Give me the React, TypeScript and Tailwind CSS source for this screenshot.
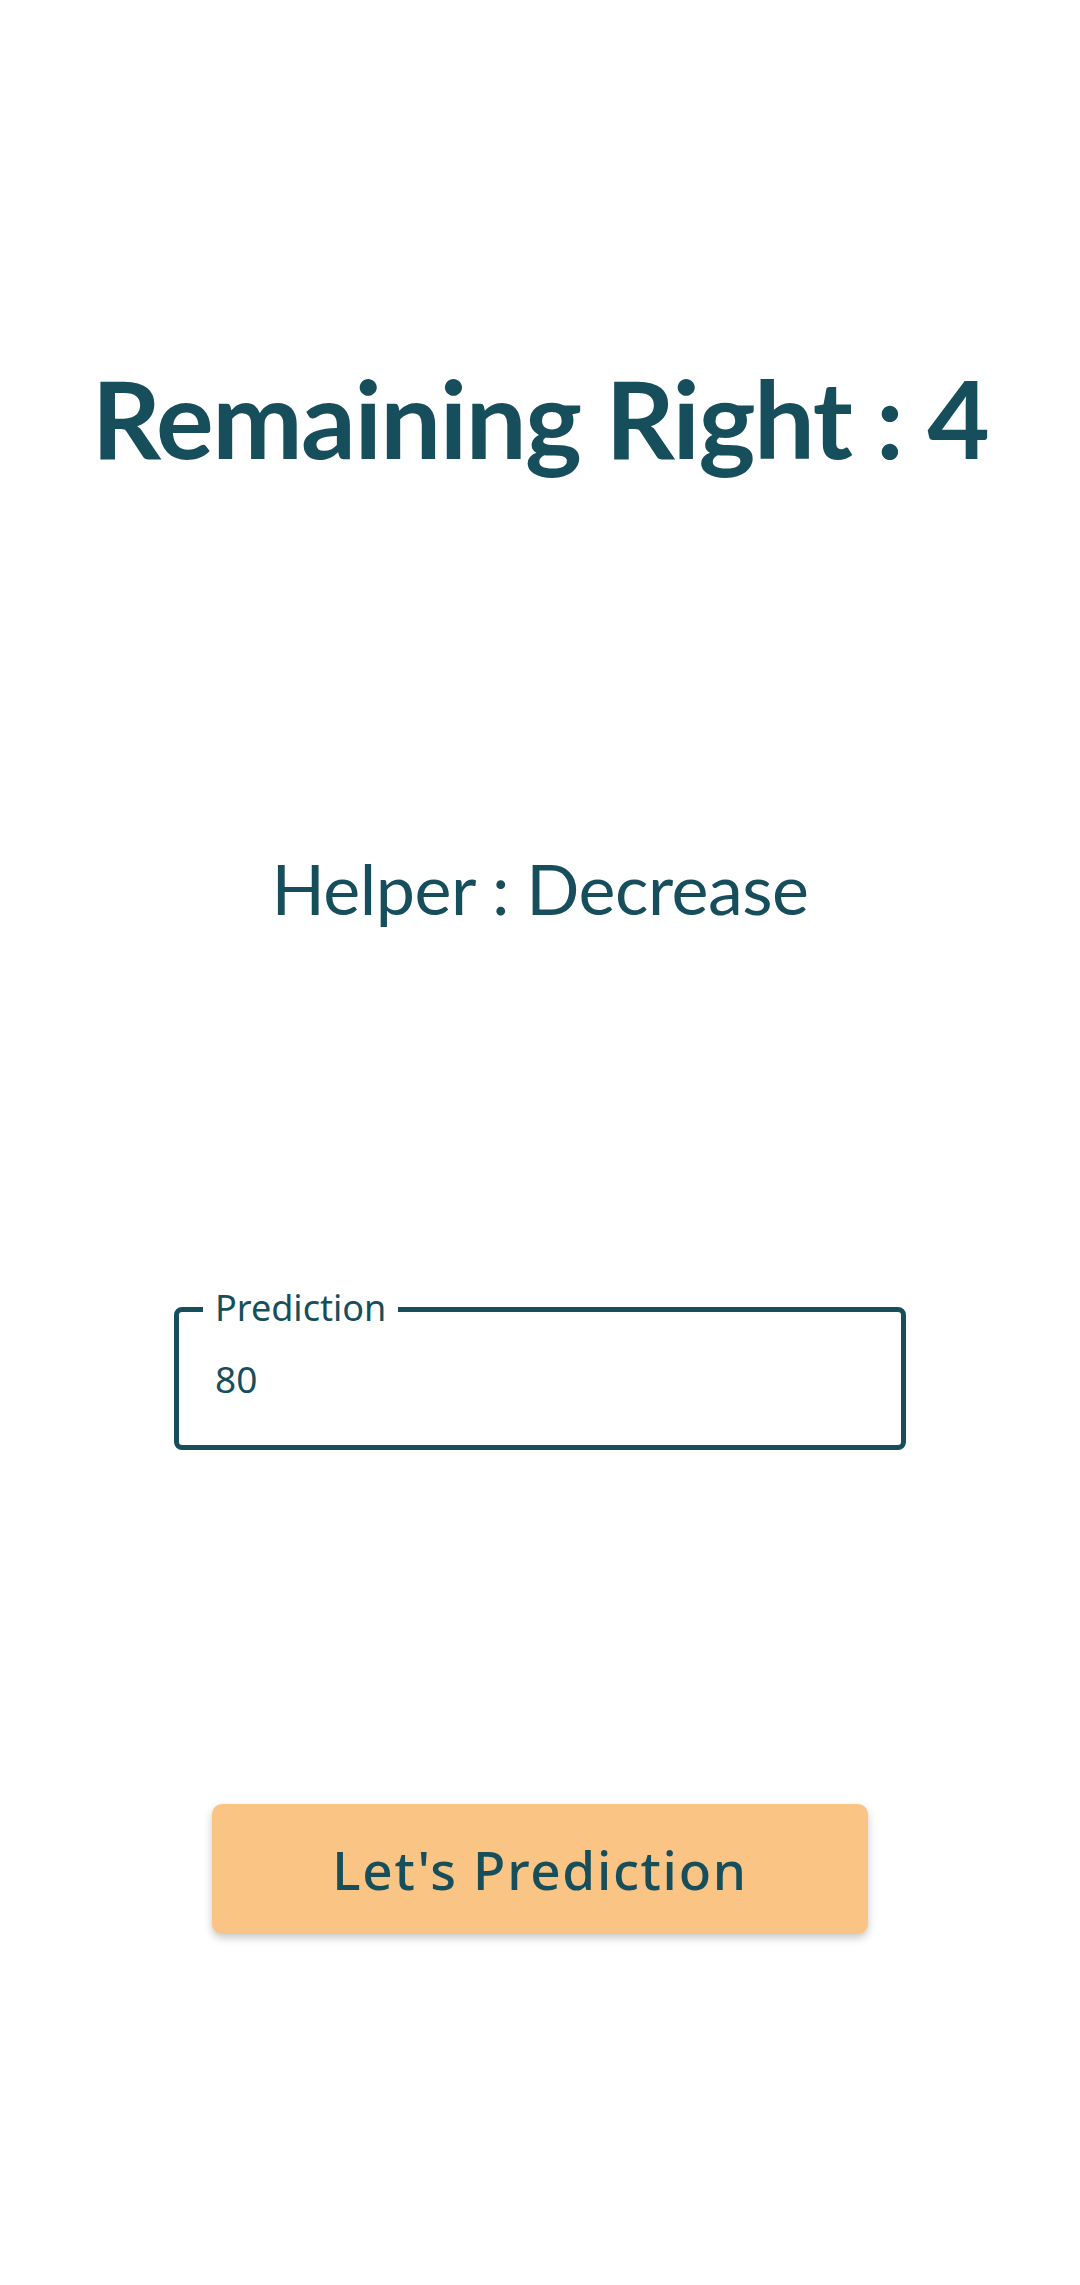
import React from 'react';

const teal = 'text-[#164f5b]';
const noto = "font-['Noto_Sans',sans-serif]";
const lato = "font-['Lato',sans-serif]";

const PredictionField: React.FC<{ value: string }> = ({ value }) => (
  <div className="relative mt-[384px] w-[732px] h-[143px] border-[5px] border-[#164f5b] rounded-[8px] flex items-center">
    <span className={`absolute left-[24px] top-[-22px] bg-white px-3 text-[36px] leading-none ${noto} ${teal}`}>
      Prediction
    </span>
    <input
      readOnly
      value={value}
      className={`w-full bg-transparent outline-none pl-[36px] text-[37px] leading-none ${noto} ${teal}`}
    />
  </div>
);

export default function App() {
  const remaining = 4;
  const helper = 'Decrease';

  return (
    <div className="w-[1080px] h-[2285px] bg-white flex flex-col items-center pt-[363px]">
      <h1 className={`text-[108px] leading-none font-bold tracking-[-1.5px] ${lato} ${teal}`}>
        Remaining Right : {remaining}
      </h1>

      <p className={`mt-[382px] text-[70px] leading-none tracking-[-0.5px] ${lato} ${teal}`}>
        Helper : {helper}
      </p>

      <PredictionField value="80" />

      <button
        className={`mt-[354px] w-[656px] h-[130px] bg-[#f9c484] rounded-[10px] shadow-[0_4px_8px_rgba(0,0,0,0.22)] text-[53px] font-medium tracking-[1.7px] leading-none ${noto} ${teal}`}
      >
        Let's Prediction
      </button>
    </div>
  );
}
